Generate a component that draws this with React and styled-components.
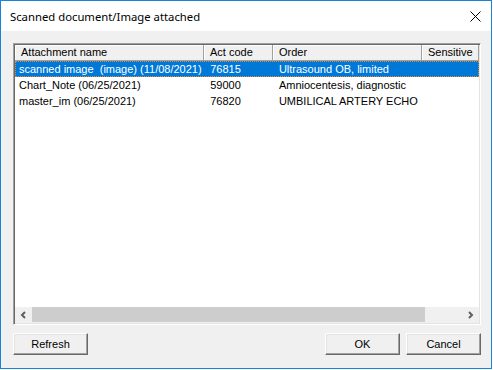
import React from 'react';
import styled, { createGlobalStyle } from 'styled-components';

const columns = [
  { key: 'name', label: 'Attachment name', width: 189 },
  { key: 'code', label: 'Act code', width: 69 },
  { key: 'order', label: 'Order', width: 149 },
  { key: 'sensitive', label: 'Sensitive', width: 57 },
];

const rows = [
  { name: 'scanned image  (image) (11/08/2021)', code: '76815', order: 'Ultrasound OB, limited', sensitive: '', selected: true },
  { name: 'Chart_Note (06/25/2021)', code: '59000', order: 'Amniocentesis, diagnostic', sensitive: '' },
  { name: 'master_im (06/25/2021)', code: '76820', order: 'UMBILICAL ARTERY ECHO', sensitive: '' },
];

const GlobalStyle = createGlobalStyle`
  html, body {
    margin: 0;
    padding: 0;
    background: #ffffff;
  }
`;

const CloseIcon = () => (
  <svg width="11" height="11" viewBox="0 0 11 11">
    <path d="M0.5 0.5 L10.5 10.5 M10.5 0.5 L0.5 10.5" stroke="#000" strokeWidth="1" fill="none" />
  </svg>
);

const Chevron = ({ dir }) => (
  <svg width="7" height="8" viewBox="0 0 7 8">
    {dir === 'left' ? (
      <path d="M5 1 L2 4 L5 7" stroke="#606060" strokeWidth="2" fill="none" />
    ) : (
      <path d="M2 1 L5 4 L2 7" stroke="#606060" strokeWidth="2" fill="none" />
    )}
  </svg>
);

function App() {
  return (
    <>
      <GlobalStyle />
      <Window>
        <TitleBar>
          <Title>Scanned document/Image attached</Title>
          <CloseButton><CloseIcon /></CloseButton>
        </TitleBar>

        <Body>
          <ListBox>
            <Header>
              {columns.map(col => (
                <HeaderCell key={col.key} style={{ width: col.width }}>{col.label}</HeaderCell>
              ))}
            </Header>

            {rows.map((row, i) => (
              <Row key={i} $selected={row.selected}>
                {columns.map((col, j) => (
                  <Cell key={col.key} $first={j === 0} style={{ width: col.width }}>{row[col.key]}</Cell>
                ))}
              </Row>
            ))}

            <Spacer />

            <ScrollBar>
              <ArrowButton><Chevron dir="left" /></ArrowButton>
              <Thumb />
              <Track />
              <ArrowButton><Chevron dir="right" /></ArrowButton>
            </ScrollBar>
          </ListBox>

          <ButtonRow>
            <Button>Refresh</Button>
            <RightButtons>
              <Button>OK</Button>
              <Button>Cancel</Button>
            </RightButtons>
          </ButtonRow>
        </Body>
      </Window>
    </>
  );
}

const Window = styled.div`
  box-sizing: border-box;
  width: 492px;
  height: 369px;
  border: 1px solid #1883d7;
  display: flex;
  flex-direction: column;
  font-family: "Liberation Sans", Arial, sans-serif;
  font-size: 11px;
  color: #000;
`;

const TitleBar = styled.div`
  height: 30px;
  flex-shrink: 0;
  background: #ffffff;
  display: flex;
  align-items: center;
  justify-content: space-between;
  padding-left: 9px;
  padding-right: 10px;
`;

const Title = styled.span`
  font-family: "Noto Sans", "Open Sans", sans-serif;
  font-size: 11.3px;
  color: #000;
`;

const CloseButton = styled.div`
  width: 11px;
  height: 11px;
  display: flex;
  margin-top: 1px;
`;

const Body = styled.div`
  flex: 1;
  background: #f0f0f0;
  display: flex;
  flex-direction: column;
  padding: 12px 10px 13px 12px;
`;

const ListBox = styled.div`
  box-sizing: border-box;
  width: 468px;
  height: 282px;
  background: #ffffff;
  border: 1px solid;
  border-color: #a0a0a0 #ffffff #ffffff #a0a0a0;
  box-shadow: inset 1px 1px 0 #696969, inset -1px -1px 0 #e3e3e3;
  padding: 1px;
  display: flex;
  flex-direction: column;
`;

const Header = styled.div`
  display: flex;
  height: 16px;
  flex-shrink: 0;
`;

const HeaderCell = styled.div`
  box-sizing: border-box;
  height: 16px;
  background: #f0f0f0;
  border-right: 1px solid #a0a0a0;
  border-bottom: 1px solid #a0a0a0;
  box-shadow: inset 1px 1px 0 #ffffff;
  padding-left: 6px;
  line-height: 15px;
  white-space: nowrap;
  overflow: hidden;
`;

const Row = styled.div`
  box-sizing: border-box;
  display: flex;
  height: 16px;
  flex-shrink: 0;
  background: ${p => (p.$selected ? '#0078d7' : 'transparent')};
  color: ${p => (p.$selected ? '#ffffff' : '#000000')};
  border: 1px dotted ${p => (p.$selected ? '#e8892a' : 'transparent')};
`;

const Cell = styled.div`
  box-sizing: border-box;
  padding-left: ${p => (p.$first ? '3px' : '6px')};
  line-height: 14px;
  white-space: pre;
  overflow: hidden;
`;

const Spacer = styled.div`
  flex: 1;
`;

const ScrollBar = styled.div`
  display: flex;
  height: 16px;
  flex-shrink: 0;
  background: #f0f0f0;
`;

const ArrowButton = styled.div`
  width: 17px;
  display: flex;
  align-items: center;
  justify-content: center;
  background: #f0f0f0;
`;

const Thumb = styled.div`
  width: 393px;
  margin: 0 0 1px 0;
  background: #cdcdcd;
`;

const Track = styled.div`
  flex: 1;
`;

const ButtonRow = styled.div`
  display: flex;
  justify-content: space-between;
  margin-top: 8px;
  width: 468px;
`;

const RightButtons = styled.div`
  display: flex;
  gap: 6px;
`;

const Button = styled.div`
  box-sizing: border-box;
  width: 75px;
  height: 22px;
  background: #f0f0f0;
  border: 1px solid;
  border-color: #ffffff #696969 #696969 #ffffff;
  box-shadow: inset -1px -1px 0 #a0a0a0, inset 1px 1px 0 #e3e3e3;
  display: flex;
  align-items: center;
  justify-content: center;
  font-size: 11px;
  color: #000;
`;

export default App;
